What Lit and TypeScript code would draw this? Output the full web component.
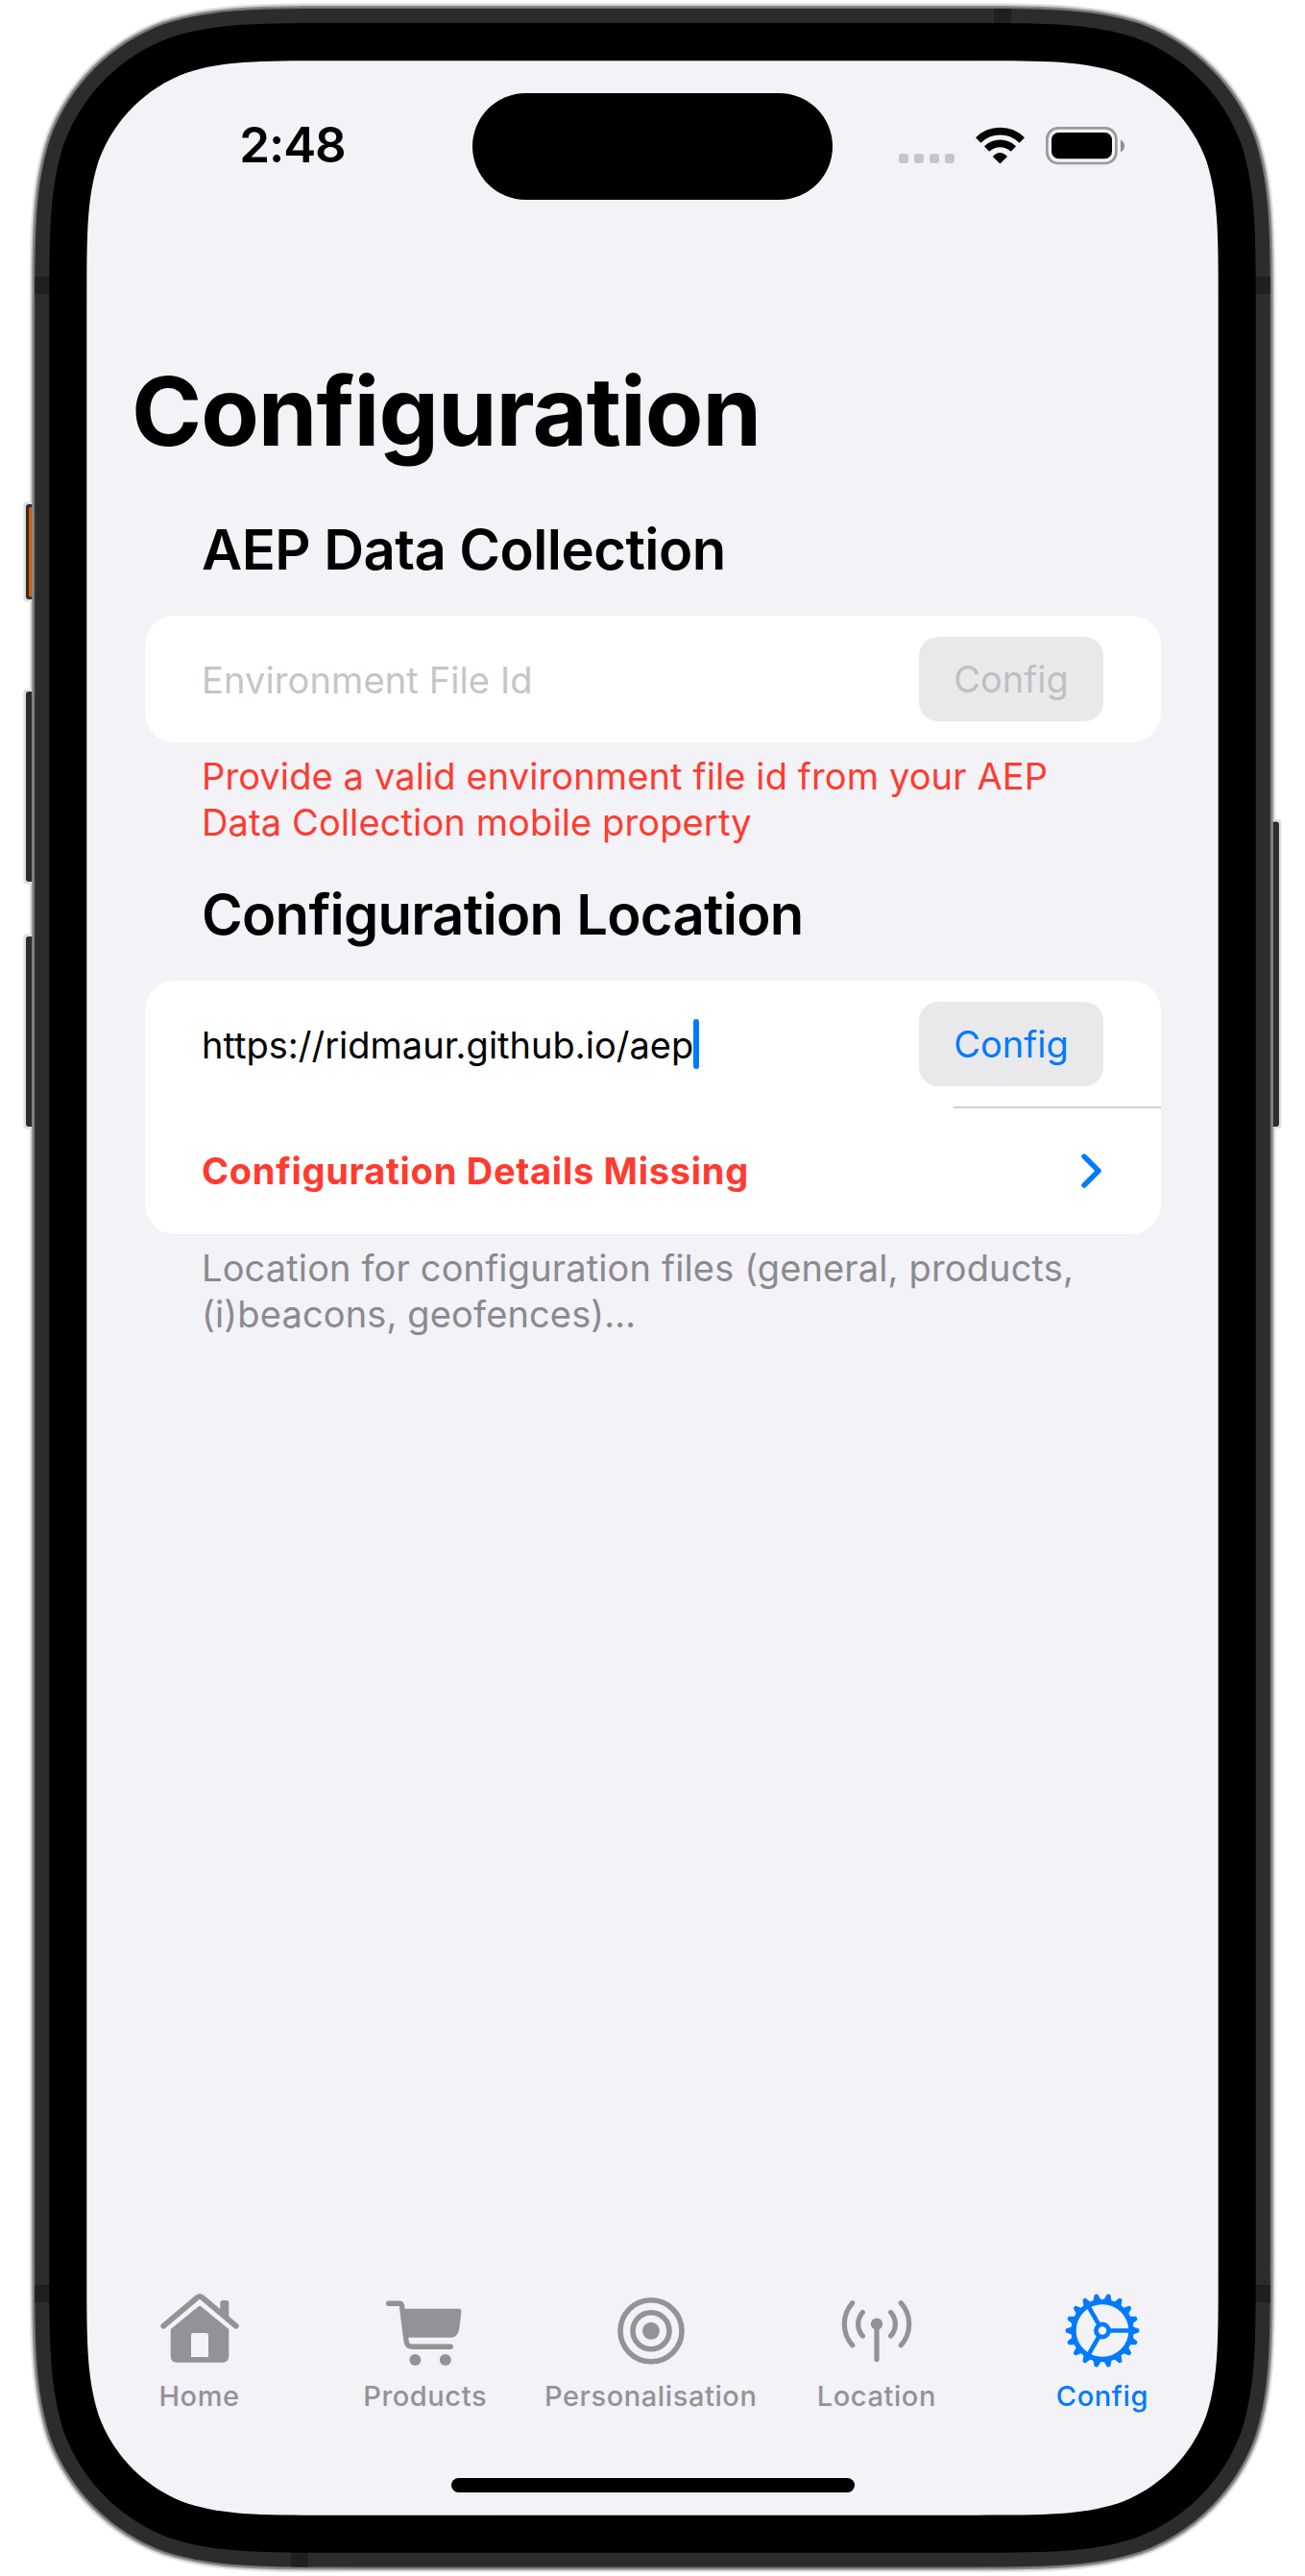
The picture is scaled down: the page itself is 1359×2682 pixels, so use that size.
import { LitElement, html, css, svg } from "lit";
import { customElement, property } from "lit/decorators.js";

const teeth = Array.from({ length: 18 }, (_, i) => i * 20 + 10);

/** Rectangle with continuous-curvature corners, as used by the device outline. */
function squircle(l: number, t: number, r: number, b: number, rad: number): string {
  const [a, c, d, e, f, g, h] = [1.52866, 1.08849, 0.86841, 0.63149, 0.07491, 0.37282, 0.16906].map((k) => k * rad);
  const corner = (x: number, y: number, sx: number, sy: number, flip: boolean) => {
    const pts = [[a, 0], [c, 0], [d, 0], [e, f], [g, h], [h, g], [f, e], [0, d], [0, c], [0, a]];
    const p = (flip ? pts : pts.reverse()).map(([u, v]) => `${(x + sx * u).toFixed(2)} ${(y + sy * v).toFixed(2)}`);
    return `${p[0]}C${p[1]} ${p[2]} ${p[3]}C${p[4]} ${p[5]} ${p[6]}C${p[7]} ${p[8]} ${p[9]}`;
  };
  return `M${corner(l, t, 1, 1, false)}L${corner(r, t, -1, 1, true)}L${corner(r, b, -1, -1, false)}L${corner(l, b, 1, -1, true)}Z`;
}

const outline = (grow: number, rad: number) => squircle(36.3 - grow, 9 - grow, 1322.7 + grow, 2672.5 + grow, rad + grow);

@customElement("tab-item")
export class TabItem extends LitElement {
  @property() icon = "home";
  @property() label = "";
  @property({ type: Boolean, reflect: true }) active = false;

  static styles = css`
    :host { display: flex; flex-direction: column; align-items: center; width: 235.1px; color: #929398; }
    :host([active]) { color: #007aff; }
    .icon { display: block; width: 88px; height: 104px; overflow: visible; }
    .label { margin-top: -5.5px; font: 500 29px/40px Inter, "Liberation Sans", sans-serif; letter-spacing: 0.6px; white-space: nowrap; }
  `;

  private glyph() {
    switch (this.icon) {
      case "home":
        return svg`
          <path d="M6.200 44.700L41.800 14.800Q44 13.100 46.200 14.800L81.800 44.700" fill="none" stroke="currentColor" stroke-width="5.800" stroke-linecap="round" stroke-linejoin="round"/>
          <path d="M65.300 30V20.500Q65.300 18 67.800 18H71.800Q74.300 18 74.300 20.500V38Z" fill="currentColor"/>
          <path fill="currentColor" fill-rule="evenodd" d="M42.800 24.200Q44 23.200 45.200 24.200L74.300 48V76Q74.300 82.700 67.600 82.700H20.400Q13.700 82.700 13.700 76V48ZM37.400 52Q35 52 35 54.400V77H53V54.400Q53 52 50.600 52Z"/>`;
      case "cart":
        return svg`
          <path d="M5.600 21.300H17Q19 21.300 19.400 23.500L24 60Q24.800 66.300 30 66.300H70.200" fill="none" stroke="currentColor" stroke-width="5.400" stroke-linecap="round" stroke-linejoin="round"/>
          <path d="M21.500 26.700H78.500Q81.700 26.700 81.400 30L79.300 47Q78 56.700 71 56.700H25Z" fill="currentColor"/>
          <circle cx="33.400" cy="80" r="6" fill="currentColor"/><circle cx="64.800" cy="80" r="6" fill="currentColor"/>`;
      case "target":
        return svg`
          <g fill="none" stroke="currentColor" stroke-width="5.600"><circle cx="44" cy="49.800" r="32"/><circle cx="44" cy="49.800" r="19"/></g>
          <circle cx="44" cy="49.800" r="9" fill="currentColor"/>`;
      case "antenna":
        return svg`
          <g fill="none" stroke="currentColor" stroke-width="5.200" stroke-linecap="round">
            <path d="M18.700 20.700A33 33 0 0 0 18.700 64.700M69.300 20.700A33 33 0 0 1 69.300 64.700"/>
            <path d="M29.400 30.400A18.300 18.300 0 0 0 29.400 55M58.600 30.400A18.300 18.300 0 0 1 58.600 55"/>
            <path d="M44 42V79.400"/></g>
          <circle cx="44" cy="42.700" r="6.200" fill="currentColor"/>`;
      default:
        return svg`
          <g fill="none" stroke="currentColor">
            <circle cx="44" cy="49.500" r="30" stroke-width="5.400"/>
            <circle cx="44" cy="49.500" r="6.600" stroke-width="4.600"/>
            <path stroke-width="4.600" d="M52 49.500H73M40 42.600L29.500 24.300M40 56.400L29.500 74.700"/>
          </g>
          ${teeth.map((a) => svg`<path fill="currentColor" stroke="currentColor" stroke-width="2" stroke-linejoin="round" d="M40.600 18.700L43 12.200H45L47.400 18.700Z" transform=${`rotate(${a} 44 49.500)`}/>`)}`;
    }
  }

  render() {
    return html`<svg class="icon" viewBox="0 0 88 104">${this.glyph()}</svg>
      <span class="label">${this.label}</span>`;
  }
}

@customElement("app-root")
export class AppRoot extends LitElement {
  static styles = css`
    :host { display: block; width: 1359px; height: 2682px; background: #fff; overflow: hidden; font-family: Inter, "Liberation Sans", sans-serif; color: #000; }
    * { box-sizing: border-box; }
    .stage { position: relative; width: 1359px; height: 2682px; padding: 63px 90px; }
    .shell { position: absolute; inset: 0; width: 1359px; height: 2682px; }
    .screen { position: relative; display: flex; flex-direction: column; width: 1179px; height: 2556px; }
    .status { display: grid; grid-template-columns: 402px 375px 402px; height: 179px; align-items: center; }
    .time { padding-left: 27px; text-align: center; font-size: 51px; font-weight: 600; line-height: 60px; letter-spacing: -1.1px; margin-top: -3px; }
    .island { height: 110.500px; border-radius: 56px; background: #000; }
    .signals { display: block; width: 250px; height: 60px; margin-left: 59px; }
    h1 { margin: 125px 0 0 47px; font-size: 99px; line-height: 122px; font-weight: 700; letter-spacing: -1.05px; white-space: nowrap; }
    h2 { margin: 0 0 0 120px; font-size: 58px; line-height: 72px; font-weight: 600; white-space: nowrap; }
    .first { margin-top: 47px; letter-spacing: -0.55px; }
    .second { margin-top: 36px; letter-spacing: -0.72px; }
    .card { margin: 33px 60px 0 61px; width: 1058px; border-radius: 31px; background: #fff; }
    .row { display: flex; align-items: center; justify-content: space-between; height: 132px; padding: 0 60px 0 59px; font-size: 38px; white-space: nowrap; }
    .placeholder { color: #c5c5c7; padding-top: 2px; letter-spacing: 0.12px; }
    .btn { width: 192px; height: 88px; border-radius: 20px; background: #e9e9eb; display: flex; align-items: center; justify-content: center; color: #007aff; }
    .btn.off { color: #bfbfc1; }
    .rule { height: 2px; margin: -1px 0 -1px 842px; background: #d0d0d2; }
    .entry { display: flex; align-items: center; }
    .url { padding-top: 2px; letter-spacing: 0.01px; }
    .caret { width: 6px; height: 52px; border-radius: 3px; background: #007aff; }
    .missing { color: #ff3b30; font-weight: 700; letter-spacing: 0.72px; }
    .chevron { display: block; width: 22px; height: 38px; margin-right: 1.500px; }
    .note { margin: 11px 0 0 120px; font-size: 38px; line-height: 48px; white-space: nowrap; }
    .note.error { color: #ff3b30; letter-spacing: 0.12px; }
    .note.info { color: #8a8a8e; letter-spacing: 0.14px; }
    .tabs { display: flex; margin-top: auto; }
    .home { width: 420px; height: 15px; margin: 65px auto 24px; border-radius: 8px; background: #000; }
  `;

  private shell() {
    return html`<svg class="shell" viewBox="0 0 1359 2682">
      <path d=${outline(5.8, 214)} fill="#e6e7e7"/>
      <path d=${outline(4.4, 214)} fill="#cfd0d0"/>
      <g fill="#dfe0e0"><rect x="24.300" y="522.500" width="12" height="104" rx="4"/><rect x="24.300" y="717.500" width="12" height="203" rx="4"/><rect x="24.300" y="972.500" width="12" height="203" rx="4"/><rect x="1322" y="853" width="12.500" height="322" rx="4"/></g>
      <g fill="#2d2d2d"><rect x="27" y="525" width="12" height="99" rx="3"/><rect x="27" y="720" width="12" height="198" rx="3"/><rect x="27" y="975" width="12" height="198" rx="3"/><rect x="1320" y="855.500" width="12" height="317.500" rx="3"/></g>
      <rect x="30" y="528" width="8" height="93.500" rx="2" fill="#d65a0e"/>
      <path d=${outline(3.1, 214)} fill="#8e8e8e"/>
      <path d=${outline(1.4, 214)} fill="#6f6f6f"/>
      <path d=${outline(0, 214)} fill="#2c2c2c"/>
      <g fill="#1f1f1f"><rect x="36.300" y="288" width="16" height="18"/><rect x="36.300" y="2379" width="16" height="18"/><rect x="1307" y="288" width="15.700" height="18"/><rect x="1307" y="2379" width="15.700" height="18"/><rect x="1035" y="9" width="18" height="16"/><rect x="303" y="2656" width="18" height="16.500"/></g>
      <path d=${squircle(51.3, 24, 1307.7, 2657.7, 200)} fill="#000"/>
      <path d=${squircle(90.3, 63.3, 1268.7, 2618.7, 165)} fill="#f2f2f7"/>
    </svg>`;
  }

  private signals() {
    return html`<svg class="signals" viewBox="926 122 250 60">
      <g fill="#c5c5ca">${[936, 952, 968, 984].map((x) => svg`<rect x=${x} y="159" width="10" height="10" rx="3"/>`)}</g>
      <g fill="none" stroke="#000"><path stroke-width="7.600" d="M1018.700 145A32.500 32.500 0 0 1 1064.300 145"/><path stroke-width="7.600" d="M1027.600 154A20 20 0 0 1 1055.400 154"/></g>
      <path d="M1033.800 162Q1041.400 154 1049 162L1041.400 169.500Z"/>
      <rect x="1090.400" y="132.400" width="72" height="36.600" rx="11.500" fill="none" stroke="#9a9a9d" stroke-width="2.700"/>
      <rect x="1095" y="137" width="63" height="27.300" rx="7.500"/>
      <path d="M1167 144.500Q1171 146.500 1171 151T1167 157.200Z" fill="#8e8e91"/>
    </svg>`;
  }

  render() {
    return html`<div class="stage">
      ${this.shell()}
      <main class="screen">
        <div class="status"><span class="time">2:48</span><span class="island"></span>${this.signals()}</div>
        <h1>Configuration</h1>
        <h2 class="first">AEP Data Collection</h2>
        <div class="card"><div class="row"><span class="placeholder">Environment File Id</span><span class="btn off">Config</span></div></div>
        <div class="note error">Provide a valid environment file id from your AEP<br>Data Collection mobile property</div>
        <h2 class="second">Configuration Location</h2>
        <div class="card">
          <div class="row"><span class="entry"><span class="url">https://ridmaur.github.io/aep</span><i class="caret"></i></span><span class="btn">Config</span></div>
          <div class="rule"></div>
          <div class="row"><span class="missing">Configuration Details Missing</span>
            <svg class="chevron" viewBox="0 0 22 38"><path d="M3 4L18 19L3 34" fill="none" stroke="#007aff" stroke-width="5.400" stroke-linecap="round" stroke-linejoin="round"/></svg></div>
        </div>
        <div class="note info">Location for configuration files (general, products,<br>(i)beacons, geofences)…</div>
        <nav class="tabs">
          <tab-item icon="home" label="Home"></tab-item>
          <tab-item icon="cart" label="Products"></tab-item>
          <tab-item icon="target" label="Personalisation"></tab-item>
          <tab-item icon="antenna" label="Location"></tab-item>
          <tab-item icon="gear" label="Config" active></tab-item>
        </nav>
        <div class="home"></div>
      </main>
    </div>`;
  }
}
